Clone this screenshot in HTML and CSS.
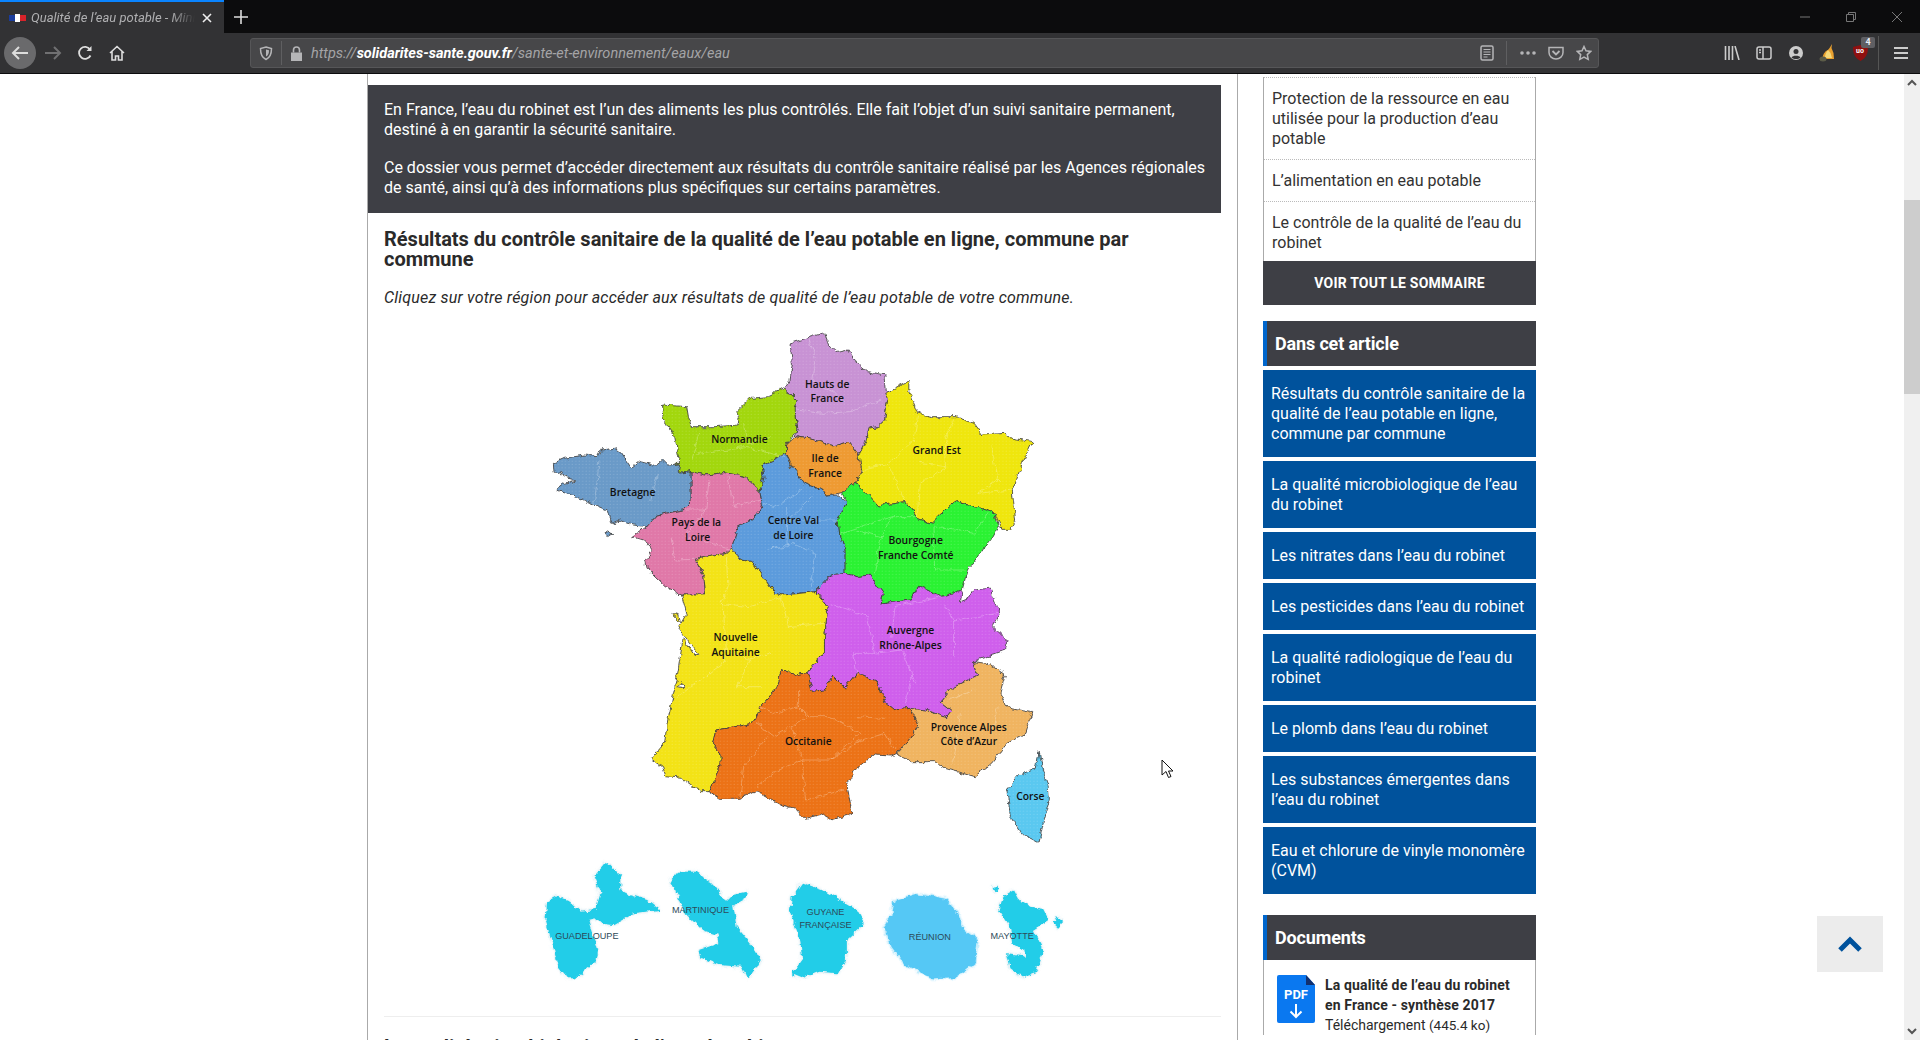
FILE: index.html
```html
<!DOCTYPE html>
<html lang="fr">
<head>
    <meta charset="UTF-8">
    <title>Qualité de l'eau potable</title>
    <link rel="stylesheet" href="styles.css">
</head>
<body>
    <div class="titlebar">
        <div class="tab">
            <svg class="favicon" width="18" height="8" viewBox="0 0 18 8"><path d="M1 1h6v6H1z" fill="#1a3c9c"/><path d="M7 0h5v8H7z" fill="#fff"/><path d="M12 1h6v6h-6z" fill="#d8232a"/></svg>
            <span class="tab-title">Qualité de l’eau potable - Mini</span>
            <svg class="tab-close" width="12" height="12" viewBox="0 0 12 12"><path d="M2 2l8 8M10 2l-8 8" stroke="#eee" stroke-width="1.6"/></svg>
        </div>
        <svg class="new-tab" width="14" height="14" viewBox="0 0 14 14"><path d="M7 0v14M0 7h14" stroke="#ddd" stroke-width="1.6"/></svg>
        <div class="window-controls">
            <svg width="12" height="12" viewBox="0 0 12 12"><path d="M1 6h10" stroke="#777"/></svg>
            <svg width="12" height="12" viewBox="0 0 12 12" fill="none" stroke="#777"><path d="M1.5 3.5h7v7h-7zM3.5 3.5v-2h7v7h-2"/></svg>
            <svg width="12" height="12" viewBox="0 0 12 12"><path d="M1 1l10 10M11 1L1 11" stroke="#777"/></svg>
        </div>
    </div>

    <div class="toolbar">
        <span class="back-btn">
            <svg width="18" height="16" viewBox="0 0 18 16" fill="none" stroke="#ddd" stroke-width="2"><path d="M17 8H2M8 2L2 8l6 6"/></svg>
        </span>
        <svg class="tool-forward" width="18" height="16" viewBox="0 0 18 16" fill="none" stroke="#707072" stroke-width="2"><path d="M1 8h15M10 2l6 6-6 6"/></svg>
        <svg class="tool-reload" width="16" height="16" viewBox="0 0 16 16" fill="none" stroke="#ddd" stroke-width="1.8"><path d="M13.5 10.5A6 6 0 1 1 13 4.5"/><path d="M14.5 1v5h-5" fill="#ddd" stroke="none"/></svg>
        <svg class="tool-home" width="16" height="16" viewBox="0 0 16 16" fill="none" stroke="#ddd" stroke-width="1.6"><path d="M1 8l7-6.5L15 8M3 6.5V15h3.5v-4h3v4H13V6.5"/></svg>

        <div class="urlbar">
            <svg class="url-shield" width="14" height="15" viewBox="0 0 14 15" fill="none" stroke="#b5b5b7" stroke-width="1.5"><path d="M7 1l5.500 1.500c0 5-1 9-5.500 11C2.500 11.500 1.500 7.500 1.500 2.500z"/><path d="M7 3.500l3 .8c0 3-.6 5-3 6.200z" fill="#b5b5b7" stroke="none"/></svg>
            <span class="url-sep"></span>
            <svg class="url-lock" width="13" height="15" viewBox="0 0 13 15"><path d="M1 6.500h11V15H1z" fill="#b5b5b7"/><path d="M3.500 6.500V4a3 3 0 0 1 6 0v2.500" fill="none" stroke="#b5b5b7" stroke-width="1.600"/></svg>
            <span class="url-text">https://<b>solidarites-sante.gouv.fr</b>/sante-et-environnement/eaux/eau</span>
            <svg class="url-reader" width="14" height="16" viewBox="0 0 14 16" fill="none" stroke="#b5b5b7" stroke-width="1.500"><rect x="1" y="1" width="12" height="14" rx="1.500"/><path d="M3.500 4.500h7M3.500 7h7M3.500 9.500h7M3.500 12h4" stroke-width="1"/></svg>
            <span class="url-sep url-sep-right"></span>
            <svg class="url-dots" width="16" height="4" viewBox="0 0 16 4" fill="#b5b5b7"><circle cx="2" cy="2" r="1.800"/><circle cx="8" cy="2" r="1.800"/><circle cx="14" cy="2" r="1.800"/></svg>
            <svg class="url-pocket" width="16" height="14" viewBox="0 0 16 14" fill="none" stroke="#b5b5b7" stroke-width="1.500"><path d="M1 1.500h14v5a7 6.500 0 0 1-14 0z"/><path d="M4.500 5L8 8.500 11.500 5" stroke-width="1.800"/></svg>
            <svg class="url-star" width="16" height="16" viewBox="0 0 16 16" fill="none" stroke="#b5b5b7" stroke-width="1.500"><path d="M8 1.500l2 4.300 4.700.6-3.400 3.200.9 4.700L8 12l-4.200 2.300.9-4.700L1.300 6.400 6 5.800z"/></svg>
        </div>

        <svg class="tool-library" width="16" height="14" viewBox="0 0 16 14" fill="none" stroke="#ccc" stroke-width="1.600"><path d="M1.500 0v14M5 0v14M8.500 0v14M11 0l4 14"/></svg>
        <svg class="tool-sidebar" width="16" height="14" viewBox="0 0 16 14" fill="none" stroke="#ccc" stroke-width="1.500"><rect x="1" y="1" width="14" height="12" rx="2"/><path d="M7 1v12M3 4h2M3 6.500h2"/></svg>
        <svg class="tool-account" width="14" height="14" viewBox="0 0 14 14"><circle cx="7" cy="7" r="7" fill="#ccc"/><circle cx="7" cy="5.500" r="2.500" fill="#323234"/><path d="M2.500 11.500C3.500 9 10.500 9 11.500 11.500 9 13.500 5 13.500 2.500 11.500z" fill="#323234"/></svg>
        <svg class="tool-flame" width="16" height="18" viewBox="0 0 16 18"><path d="M13 0l-.5 4 2 5 .5 6H4c-1-3 1-6 3-8 3-1 4-4 6-7z" fill="#e8a030"/><path d="M9 6l2.500 3 1.500 5H6c0-3 1-6 3-8z" fill="#f6d878"/><ellipse cx="4" cy="15" rx="3.500" ry="2.500" fill="#5c5c48"/></svg>
        <span class="tool-ublock">
            <svg width="15" height="16" viewBox="0 0 15 16"><path d="M0 2l7.500-2L15 2c0 7-2 11-7.500 14C2 13 0 9 0 2z" fill="#8e1010"/></svg>
            <span class="ublock-mark">uo</span>
            <span class="ublock-badge">4</span>
        </span>
        <span class="tool-sep"></span>
        <svg class="tool-menu" width="14" height="12" viewBox="0 0 14 12" stroke="#ccc" stroke-width="2"><path d="M0 1h14M0 6h14M0 11h14"/></svg>
    </div>

    <div class="page">
        <div class="content">
            <main class="article">
                <div class="chapo">
                    <p>En France, l’eau du robinet est l’un des aliments les plus contrôlés. Elle fait l’objet d’un suivi sanitaire permanent, destiné à en garantir la sécurité sanitaire.</p>
                    <p>Ce dossier vous permet d’accéder directement aux résultats du contrôle sanitaire réalisé par les Agences régionales de santé, ainsi qu’à des informations plus spécifiques sur certains paramètres.</p>
                </div>
                <div class="article-body">
                    <h2>Résultats du contrôle sanitaire de la qualité de l’eau potable en ligne, commune par commune</h2>
                    <p class="intro">Cliquez sur votre région pour accéder aux résultats de qualité de l’eau potable de votre commune.</p>

                    <svg class="carte" width="540" height="680" viewBox="0 0 1568 2040" preserveAspectRatio="none">
                        <defs>
                            <pattern id="points" width="10" height="10" patternUnits="userSpaceOnUse"><circle cx="3" cy="3" r="1.400" fill="#fff" opacity=".3"/></pattern>
                            <filter id="halo" x="-20%" y="-20%" width="140%" height="140%"><feGaussianBlur stdDeviation="5"/></filter>
                            <filter id="cote" x="-5%" y="-5%" width="110%" height="110%">
                                <feTurbulence type="fractalNoise" baseFrequency=".05" numOctaves="3" seed="4"/>
                                <feDisplacementMap in="SourceGraphic" scale="18" xChannelSelector="R" yChannelSelector="G"/>
                            </filter>
                        </defs>

                        <g filter="url(#cote)">
                            <g class="regions">
                                <polygon fill="#c892d4" points="755,70 855,38 868,75 890,95 920,88 945,125 980,155 1030,165 1035,215 1038,240 1030,300 1010,320 985,325 975,365 955,405 925,365 880,378 830,360 770,350 778,330 770,270 775,240 740,205 755,180 762,130"/>
                                <polygon fill="#a2d70d" points="385,255 455,260 460,290 470,320 540,320 600,315 610,290 600,275 640,235 690,230 740,205 775,240 770,270 778,330 745,375 745,400 672,435 680,470 668,515 625,470 565,458 510,465 465,455 430,460 415,430 435,430 420,350 390,300"/>
                                <polygon fill="#6b9ac8" points="68,430 100,415 160,405 195,410 205,390 245,385 265,400 295,445 320,425 365,437 385,420 400,435 435,432 430,460 468,455 468,545 445,570 395,580 365,590 340,620 300,615 260,600 235,610 225,570 180,550 120,525 75,510 100,490 130,480 95,470 90,455 70,460"/>
                                <polygon fill="#6b9ac8" points="218,638 232,634 240,645 226,650"/>
                                <polygon fill="#e078a8" points="468,455 510,465 565,458 625,470 668,515 675,555 650,595 605,618 585,685 570,700 480,718 505,770 510,825 440,825 395,800 340,745 335,720 355,690 330,660 298,650 340,620 365,590 395,580 445,570 468,545"/>
                                <polygon fill="#5b9bdc" points="745,400 760,440 795,490 850,510 860,528 895,525 920,545 895,600 900,650 915,690 915,760 870,770 830,815 735,825 710,820 670,760 645,725 610,720 585,685 605,618 650,595 675,555 668,515 680,470 672,435"/>
                                <polygon fill="#ee9a30" points="745,375 770,350 830,360 880,378 925,365 955,405 965,455 945,488 905,518 860,528 850,510 795,490 760,440 745,400"/>
                                <polygon fill="#efe60c" points="1030,220 1100,185 1100,215 1125,280 1165,290 1235,290 1290,310 1315,345 1380,340 1400,355 1460,365 1430,430 1400,510 1410,600 1395,628 1370,628 1350,580 1240,542 1215,560 1165,610 1125,595 1090,545 1010,558 985,530 945,488 965,455 955,405 975,365 985,325 1010,320 1030,300 1038,240"/>
                                <polygon fill="#2cf230" points="945,488 985,530 1010,558 1090,545 1125,595 1165,610 1215,560 1240,542 1350,580 1360,620 1345,650 1300,710 1270,750 1255,810 1195,830 1130,797 1105,840 1020,852 1025,820 985,765 950,770 915,760 915,690 900,650 895,600 920,545 905,518"/>
                                <polygon fill="#cf5eec" points="830,815 870,770 915,760 950,770 985,765 1025,820 1020,852 1105,840 1130,797 1195,830 1255,810 1250,845 1275,835 1285,810 1335,805 1365,880 1345,920 1388,965 1380,990 1285,1025 1300,1065 1225,1105 1195,1145 1225,1170 1210,1190 1145,1170 1105,1165 1060,1170 1030,1145 1010,1085 950,1060 915,1105 880,1068 855,1110 820,1115 805,1058 855,990 855,950 865,860"/>
                                <polygon fill="#f3e318" points="440,825 510,825 505,770 480,718 570,700 585,685 610,720 645,725 670,760 710,820 735,825 830,815 865,860 855,950 855,990 805,1058 770,1065 735,1050 715,1105 670,1160 650,1210 540,1230 530,1270 555,1300 555,1335 520,1415 495,1415 440,1375 395,1370 385,1340 350,1318 390,1270 400,1200 420,1105 430,1050 445,955 480,1010 490,1000 430,925 455,880"/>
                                <polygon fill="#ec7215" points="735,1050 770,1065 805,1058 820,1115 855,1110 880,1068 915,1105 950,1060 1010,1085 1030,1145 1060,1170 1105,1165 1128,1215 1100,1260 1065,1300 1050,1308 1000,1305 945,1345 920,1390 935,1482 875,1500 850,1485 800,1498 770,1465 730,1455 655,1410 610,1435 550,1435 520,1415 555,1335 555,1300 530,1270 540,1230 650,1210 670,1160 715,1105"/>
                                <polygon fill="#f0b460" points="1105,1165 1145,1170 1210,1190 1225,1170 1195,1145 1225,1105 1300,1065 1285,1025 1330,1030 1380,1065 1365,1120 1385,1160 1460,1175 1440,1240 1385,1270 1340,1330 1290,1370 1205,1345 1175,1325 1110,1325 1065,1302 1100,1260 1128,1215"/>
                                <polygon fill="#5ac8f0" points="1478,1292 1488,1350 1505,1400 1508,1440 1490,1510 1478,1568 1425,1540 1395,1490 1385,1410 1420,1365 1470,1345"/>
                                <polygon fill="#fff" points="430,1100 440,1085 446,1103"/>
                                <polygon fill="#f3e318" points="415,880 432,885 437,910 425,895"/>
                            </g>

                            <g class="departements">
                                <path d="M810,55 830,120 820,190 880,215 915,250M770,270 850,280 930,275 1020,240M200,420 195,490 185,550M370,460 350,545M490,340 470,420M620,310 630,370 700,350M490,400 620,380 740,410"/>
                                <path d="M1125,290 1115,360 1040,430 960,450M1230,295 1205,370 1210,440 1130,490 1125,595M1340,380 1360,480 1300,520 1400,510M1130,430 1210,440M1040,430 1090,545"/>
                                <path d="M520,480 510,570 450,570M575,470 590,560 670,540M410,650 420,720 480,718M510,570 450,650 590,690"/>
                                <path d="M680,550 710,560 790,510M745,560 750,680 690,690M820,530 750,600 900,600M690,690 760,670 830,700 815,815"/>
                                <path d="M900,640 1050,590 1120,590M950,630 1020,650 1050,590M1170,620 1175,750 1265,750M1020,650 1000,760M1330,580 1290,640 1170,620"/>
                                <path d="M570,710 575,800 555,850 635,860 735,830M730,830 750,920 855,910M560,850 570,990 640,1020 700,1000M640,1020 600,1100 670,1100M430,1130 560,1030 570,990"/>
                                <path d="M870,850 980,890 1000,1000 940,1000 950,1070M1000,1000 1080,990 1120,1090M1060,860 1050,950M1200,850 1230,900 1230,1010M1060,860 1200,830M1230,900 1360,880M1110,1060 1090,1150"/>
                                <path d="M1290,1110 1210,1140M1250,1180 1230,1330M1360,1160 1340,1240"/>
                                <path d="M670,1160 710,1180 780,1160 780,1110M780,1160 810,1190 760,1220 710,1250 660,1210M760,1220 790,1320 870,1320 960,1240 870,1190 810,1190M950,1190 1030,1195M870,1320 960,1260 1030,1240 1060,1290M690,1250 620,1340 610,1430M790,1320 720,1350 660,1400M790,1320 800,1440 910,1410"/>
                            </g>
                        </g>

                        <rect class="grain" width="1568" height="1600" fill="url(#points)"/>

                        <g class="noms">
                            <text x="863" y="203">Hauts de</text><text x="863" y="247">France</text>
                            <text x="608" y="368">Normandie</text>
                            <text x="857" y="425">Ile de</text><text x="857" y="470">France</text>
                            <text x="1181" y="402">Grand Est</text>
                            <text x="298" y="528">Bretagne</text>
                            <text x="483" y="618">Pays de la</text><text x="487" y="662">Loire</text>
                            <text x="765" y="612">Centre Val</text><text x="765" y="656">de Loire</text>
                            <text x="1120" y="673">Bourgogne</text><text x="1120" y="717">Franche Comté</text>
                            <text x="1105" y="942">Auvergne</text><text x="1105" y="986">Rhône-Alpes</text>
                            <text x="597" y="963">Nouvelle</text><text x="597" y="1007">Aquitaine</text>
                            <text x="808" y="1275">Occitanie</text>
                            <text x="1274" y="1232">Provence Alpes</text><text x="1274" y="1276">Côte d’Azur</text>
                            <text x="1453" y="1440">Corse</text>
                        </g>

                        <g filter="url(#cote)">
                            <g class="outremer-halo" filter="url(#halo)" fill="#bcdde8">
                                <use href="#guadeloupe"/><use href="#martinique"/><use href="#guyane"/><use href="#reunion"/><use href="#mayotte"/>
                            </g>
                            <g class="outremer" fill="#22cde8">
                                <polygon id="guadeloupe" points="222,1627 262,1665 262,1710 290,1725 340,1740 378,1770 300,1780 240,1815 205,1810 190,1795 170,1800 195,1890 190,1925 130,1975 110,1975 80,1935 65,1870 45,1800 50,1745 80,1728 110,1740 150,1775 190,1770 205,1720 185,1670"/>
                                <polygon id="martinique" points="405,1685 430,1655 480,1655 530,1690 570,1745 590,1725 630,1715 625,1735 590,1755 600,1820 640,1870 670,1920 650,1960 630,1975 615,1940 550,1935 500,1915 490,1890 550,1870 545,1845 500,1830 450,1780 430,1725"/>
                                <polygon id="guyane" points="790,1688 850,1710 900,1740 950,1770 972,1810 920,1860 920,1910 895,1960 840,1955 790,1975 760,1962 790,1920 785,1860 755,1775 760,1730"/>
                                <polygon id="reunion" fill="#55c8f5" points="1055,1745 1125,1723 1210,1740 1240,1780 1260,1830 1300,1860 1290,1930 1240,1970 1170,1975 1090,1935 1050,1880 1028,1815 1050,1785"/>
                                <path id="mayotte" d="M1375,1730 1405,1710 1420,1740 1460,1765 1490,1770 1505,1800 1460,1830 1490,1890 1470,1955 1430,1970 1395,1945 1385,1900 1425,1905 1440,1915 1435,1890 1400,1870 1395,1825 1360,1770zM1343,1700 1358,1697 1360,1713 1348,1712zM1520,1810 1533,1788 1546,1808 1532,1822z"/>
                            </g>
                        </g>
                        <g class="noms-outremer">
                            <text x="165" y="1858">GUADELOUPE</text>
                            <text x="495" y="1778">MARTINIQUE</text>
                            <text x="858" y="1786">GUYANE</text><text x="858" y="1825">FRANÇAISE</text>
                            <text x="1161" y="1861">RÉUNION</text>
                            <text x="1400" y="1858">MAYOTTE</text>
                        </g>
                    </svg>

                    <hr class="separateur">
                    <h2>La qualité microbiologique de l’eau du robinet</h2>
                </div>
            </main>

            <aside class="sidebar">
                <ul class="sommaire">
                    <li>Protection de la ressource en eau utilisée pour la production d’eau potable</li>
                    <li>L’alimentation en eau potable</li>
                    <li>Le contrôle de la qualité de l’eau du robinet</li>
                </ul>
                <a class="voir-tout">VOIR TOUT LE SOMMAIRE</a>

                <h3 class="side-title">Dans cet article</h3>
                <ul class="ancres">
                    <li>Résultats du contrôle sanitaire de la qualité de l’eau potable en ligne, commune par commune</li>
                    <li>La qualité microbiologique de l’eau du robinet</li>
                    <li>Les nitrates dans l’eau du robinet</li>
                    <li>Les pesticides dans l’eau du robinet</li>
                    <li>La qualité radiologique de l’eau du robinet</li>
                    <li>Le plomb dans l’eau du robinet</li>
                    <li>Les substances émergentes dans l’eau du robinet</li>
                    <li>Eau et chlorure de vinyle monomère (CVM)</li>
                </ul>

                <h3 class="side-title side-title-docs">Documents</h3>
                <div class="document">
                    <svg class="pdf-icon" width="38" height="48" viewBox="0 0 38 48">
                        <path d="M2 0h27l9 10v36a2 2 0 0 1-2 2H2a2 2 0 0 1-2-2V2a2 2 0 0 1 2-2z" fill="#0a78f0"/>
                        <path d="M29 0l9 10h-9z" fill="#12306e"/>
                        <text x="19" y="24">PDF</text>
                        <path d="M19 29v13M13.500 36.500L19 42l5.500-5.500" fill="none" stroke="#fff" stroke-width="2"/>
                    </svg>
                    <div class="doc-text">
                        <strong>La qualité de l’eau du robinet en France - synthèse 2017</strong>
                        <span>Téléchargement <small>(445.4 ko)</small></span>
                    </div>
                </div>
            </aside>
        </div>

        <div class="scrollbar">
            <svg class="scroll-arrow" width="16" height="17" viewBox="0 0 16 17" fill="none" stroke="#555" stroke-width="2"><path d="M4 11l4-4 4 4"/></svg>
            <div class="scroll-thumb"></div>
            <svg class="scroll-arrow scroll-arrow-down" width="16" height="17" viewBox="0 0 16 17" fill="none" stroke="#555" stroke-width="2"><path d="M4 6l4 4 4-4"/></svg>
        </div>

        <a class="haut-de-page">
            <svg width="24" height="16" viewBox="0 0 24 16" fill="none" stroke="#00529c" stroke-width="5"><path d="M2 14L12 4l10 10"/></svg>
        </a>
        <svg class="curseur" width="13" height="20" viewBox="0 0 13 20"><path d="M1 1v15l4-3.500 2.500 6 2.500-1-2.500-5.500H12z" fill="#fff" stroke="#111"/></svg>
    </div>
</body>
</html>
```

FILE: styles.css
```css
* {
    box-sizing: border-box;
}

html, body {
    height: 100%;
}

body {
    margin: 0;
    overflow: hidden;
    display: flex;
    flex-direction: column;
    font-family: Roboto, "Liberation Sans", sans-serif;
    background: white;
    color: #2a2a2a;
}

/* barre du navigateur */
.titlebar {
    height: 33px;
    flex: none;
    display: flex;
    align-items: center;
    background: #0c0c0d;
}

.tab {
    width: 224px;
    height: 33px;
    display: flex;
    align-items: center;
    background: #323234;
    border-top: 2px solid #0a84ff;
    padding: 0 11px 0 8px;
}

.favicon {
    flex: none;
    margin-right: 5px;
}

.tab-title {
    flex: 1;
    overflow: hidden;
    white-space: nowrap;
    font-size: 13px;
    font-style: italic;
    color: #b0b0b2;
    -webkit-mask-image: linear-gradient(to right, black 85%, transparent);
    mask-image: linear-gradient(to right, black 85%, transparent);
}

.tab-close {
    flex: none;
    margin-left: 6px;
}

.new-tab {
    margin-left: 10px;
}

.window-controls {
    margin-left: auto;
    display: flex;
    gap: 34px;
    padding-right: 17px;
}

.toolbar {
    height: 41px;
    flex: none;
    display: flex;
    align-items: center;
    background: #323234;
    border-bottom: 1px solid #0c0c0d;
    padding-left: 4px;
}

.back-btn {
    width: 32px;
    height: 32px;
    flex: none;
    display: flex;
    align-items: center;
    justify-content: center;
    border-radius: 50%;
    background: #6a6a6c;
}

.tool-forward {
    margin-left: 8px;
}

.tool-reload {
    margin-left: 15px;
}

.tool-home {
    margin-left: 16px;
}

.urlbar {
    width: 1349px;
    height: 30px;
    flex: none;
    display: flex;
    align-items: center;
    margin-left: 125px;
    background: #474749;
    border: 1px solid #565658;
    border-radius: 3px;
    padding-left: 8px;
}

.url-sep {
    width: 1px;
    height: 24px;
    background: #5f5f61;
    margin-left: 8px;
}

.url-lock {
    margin-left: 8px;
}

.url-text {
    margin-left: 8px;
    flex: 1;
    font-size: 14.5px;
    font-style: italic;
    white-space: nowrap;
    color: #a4a4a6;
}

.url-text b {
    color: white;
}

.url-reader {
    flex: none;
}

.url-sep-right {
    margin-left: 12px;
}

.url-dots {
    margin-left: 13px;
}

.url-pocket {
    margin-left: 12px;
}

.url-star {
    margin-left: 12px;
    margin-right: 6px;
}

.tool-library {
    margin-left: 125px;
}

.tool-sidebar {
    margin-left: 16px;
}

.tool-account {
    margin-left: 17px;
}

.tool-flame {
    margin-left: 16px;
}

.tool-ublock {
    position: relative;
    display: flex;
    margin-left: 18px;
}

.ublock-mark {
    position: absolute;
    left: 3px;
    top: 2px;
    font-size: 7px;
    font-weight: bold;
    color: white;
}

.ublock-badge {
    position: absolute;
    left: 8px;
    top: -8px;
    width: 14px;
    height: 11px;
    border-radius: 2px;
    background: #5f5f63;
    color: #e8eef8;
    font-size: 9px;
    font-weight: bold;
    line-height: 11px;
    text-align: center;
}

.tool-sep {
    width: 1px;
    height: 34px;
    background: #555;
    margin-left: 10px;
}

.tool-menu {
    margin-left: 15px;
}

/* page */
.page {
    flex: 1;
    min-height: 0;
    position: relative;
    display: flex;
}

.content {
    flex: 1;
    min-width: 0;
    display: flex;
    align-items: flex-start;
    padding-left: 367px;
    overflow: hidden;
}

.article {
    width: 871px;
    flex: none;
    min-height: 1200px;
    padding: 11px 16px 0 0;
    border-left: 1px solid #aaa;
    border-right: 1px solid #aaa;
}

.chapo {
    background: #3e3f45;
    color: white;
    padding: 15px 16px;
    font-size: 16px;
    line-height: 20px;
}

.chapo p {
    margin: 0;
}

.chapo p + p {
    margin-top: 18px;
}

.article-body {
    padding-left: 16px;
}

.article-body h2 {
    margin: 16px 0 0;
    font-size: 20px;
    line-height: 20px;
    font-weight: bold;
    color: #2a2a2a;
}

.intro {
    margin: 19px 0 12px;
    font-size: 16px;
    line-height: 20px;
    font-style: italic;
    letter-spacing: .2px;
}

.carte {
    display: block;
    margin-left: 146px;
}

.regions {
    stroke: #3c3c3c;
    stroke-width: 2.500;
    stroke-linejoin: round;
}

.departements {
    fill: none;
    stroke: white;
    stroke-opacity: .4;
    stroke-width: 2;
}

.noms text {
    font-family: "Open Sans", sans-serif;
    font-size: 30px;
    font-weight: 600;
    fill: #111;
    text-anchor: middle;
}

.noms-outremer text {
    font-family: "Liberation Sans", sans-serif;
    font-size: 26.5px;
    fill: #2c4a58;
    text-anchor: middle;
}

.separateur {
    margin: 16px 0 0;
    border: 0;
    border-top: 1px solid #eee;
}

.separateur + h2 {
    margin-top: 20px;
}

/* colonne de droite */
.sidebar {
    width: 273px;
    flex: none;
    margin-left: 25px;
    padding-top: 3px;
}

.sommaire {
    list-style: none;
    margin: 0;
    padding: 0;
    border-left: 1px solid #aaa;
    border-right: 1px solid #aaa;
    font-size: 16px;
    line-height: 20px;
    color: #333;
}

.sommaire li {
    padding: 11px 12px 10px 8px;
    border-top: 1px dotted #bbb;
}

.sommaire li:last-child {
    padding-bottom: 8px;
}

.voir-tout {
    display: block;
    height: 44px;
    background: #3e3f45;
    color: white;
    font-size: 14px;
    font-weight: bold;
    line-height: 44px;
    text-align: center;
    letter-spacing: .2px;
}

.side-title {
    height: 45px;
    margin: 16px 0 0;
    padding-left: 8px;
    background: #3e3f45;
    border-left: 4px solid #0066cc;
    color: white;
    font-size: 18px;
    font-weight: bold;
    line-height: 45px;
    letter-spacing: -.15px;
}

.side-title-docs {
    margin-top: 21px;
}

.ancres {
    list-style: none;
    margin: 0;
    padding: 0;
    font-size: 16px;
    line-height: 20px;
    color: white;
}

.ancres li {
    margin-top: 4px;
    padding: 14px 8px 13px;
    background: #00529c;
}

.document {
    display: flex;
    gap: 10px;
    padding: 15px 14px 0 13px;
    border-left: 1px solid #aaa;
    border-right: 1px solid #aaa;
    font-size: 14px;
    line-height: 20px;
}

.pdf-icon {
    flex: none;
}

.pdf-icon text {
    font-family: Roboto, sans-serif;
    font-size: 13px;
    font-weight: bold;
    fill: white;
    text-anchor: middle;
}

.doc-text strong {
    display: block;
    letter-spacing: .15px;
}

.doc-text small {
    font-size: 13.5px;
}

/* ascenseur */
.scrollbar {
    width: 16px;
    flex: none;
    display: flex;
    flex-direction: column;
    background: #f0f0f0;
}

.scroll-arrow {
    flex: none;
}

.scroll-thumb {
    height: 194px;
    margin-top: 109px;
    background: #cdcdcd;
}

.scroll-arrow-down {
    margin-top: auto;
}

.haut-de-page {
    position: absolute;
    left: 1817px;
    top: 842px;
    width: 66px;
    height: 56px;
    display: flex;
    align-items: center;
    justify-content: center;
    background: #ececec;
}

.curseur {
    position: absolute;
    left: 1161px;
    top: 685px;
}
```
